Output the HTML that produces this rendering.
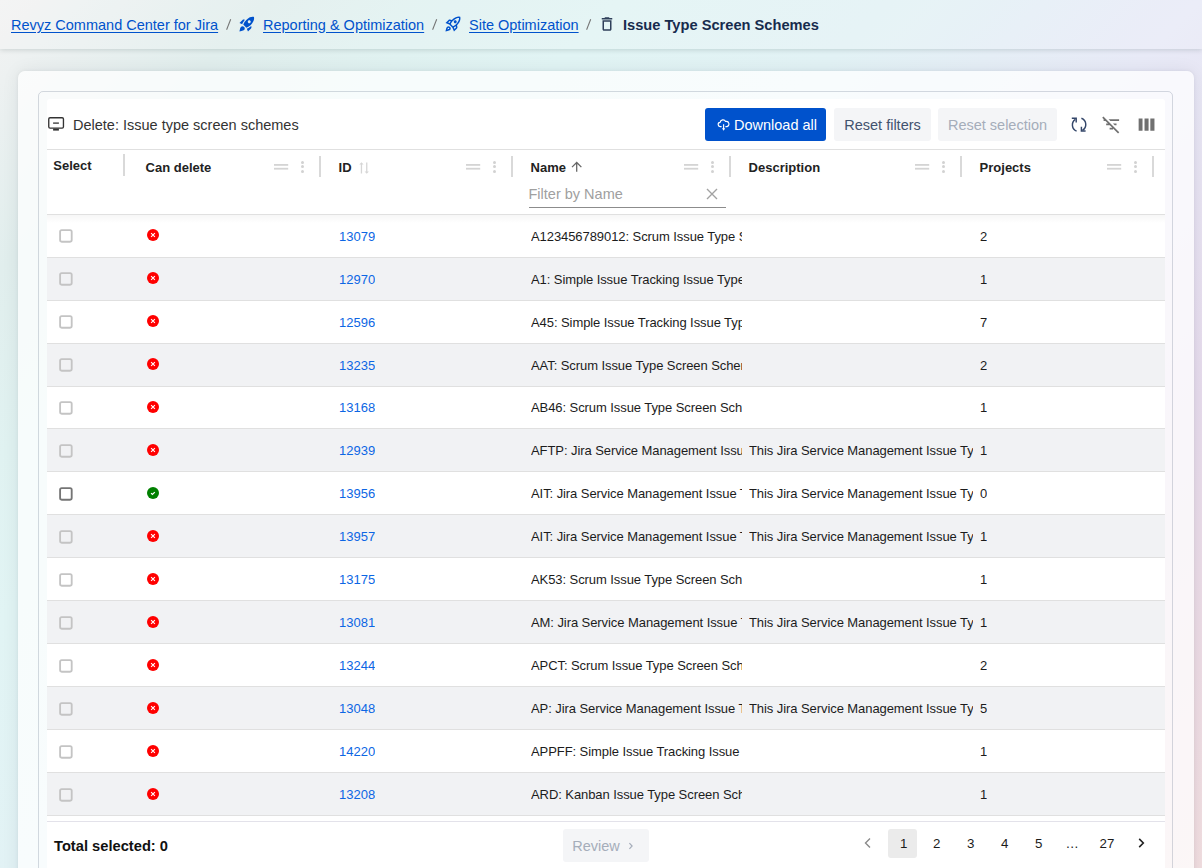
<!DOCTYPE html><html><head><meta charset="utf-8"><style>*{margin:0;padding:0;box-sizing:border-box}
html,body{width:1202px;height:868px;overflow:hidden;font-family:"Liberation Sans",sans-serif;position:relative}
.abs{position:absolute;line-height:0}
.bg{position:absolute;left:0;top:0;width:1202px;height:868px;background:linear-gradient(135deg,#f3f3f3 0%,#eaf0f0 6%,#e1eeed 13%,#e0f2f1 22%,#e1f4f4 30%,#e2f2f5 43%,#e8eaf7 58%,#e6dbec 77%,#ecdbe4 90%,#f1dee0 100%)}
.hdr{position:absolute;left:0;top:0;width:1202px;height:49px;background:rgba(255,255,255,0.14);box-shadow:0 1px 5px rgba(0,40,40,0.16)}
.bc{position:absolute;top:17.5px;font-size:14.5px;line-height:14.5px;color:#0052cc;text-decoration:underline;text-underline-offset:2px;white-space:nowrap}
.sl{position:absolute;top:17.5px;font-size:14.5px;line-height:14.5px;color:#6b6e76}
.bi{position:absolute;line-height:0}
.cur{position:absolute;top:17.9px;font-size:14.65px;line-height:14.65px;color:#172b4d;font-weight:bold;white-space:nowrap}
.outer{position:absolute;left:18px;top:71px;width:1176px;height:900px;border-radius:7px;background:rgba(255,255,255,0.74);box-shadow:0 0 4px rgba(0,30,40,0.06),0 0 18px rgba(0,30,40,0.07)}
.inner{position:absolute;left:38px;top:91px;width:1135px;height:900px;border-radius:5px;border:1px solid rgba(9,30,66,0.16)}
.paper{position:absolute;left:47px;top:99px;width:1118px;height:900px;border-radius:3px;background:#fff}
.ttl{position:absolute;top:117.5px;font-size:14.5px;line-height:14.5px;color:#333;white-space:nowrap}
.btn{position:absolute;top:108px;height:33px;border-radius:3px;display:flex;align-items:center;justify-content:center;font-size:14.5px;white-space:nowrap}
.btn svg{margin-right:5px}
.pri{background:#0052cc;color:#fff}
.sec{background:#f4f5f7;color:#42526e}
.dis{background:#f4f5f7;color:#a5adba}
.thead{position:absolute;left:47px;top:149px;width:1118px;height:66px;border-top:1px solid #e0e0e0;border-bottom:1px solid #e0e0e0;background:#fff}
.hl{position:absolute;top:160.6px;font-size:13px;line-height:13px;font-weight:bold;color:#222;white-space:nowrap}
.dh{position:absolute;top:163.9px;width:14.2px;height:5.6px;border-top:1.8px solid #d6d6d6;border-bottom:1.8px solid #d6d6d6}
.kb{position:absolute;top:160.5px;width:3px;height:12px}
.kb i{position:absolute;left:0;width:3px;height:3px;border-radius:50%;background:#d2d2d2}
.kb i:nth-child(1){top:0}.kb i:nth-child(2){top:4.85px}.kb i:nth-child(3){top:9.7px}
.sep{position:absolute;top:156px;width:2px;height:21px;background:#d9d9d9}
.filt{position:absolute;left:528.5px;top:187px;font-size:14.5px;line-height:14.5px;color:#a0a0a0;white-space:nowrap}
.fx{position:absolute;left:705.5px;top:187.6px;line-height:0}
.fline{position:absolute;left:529px;top:207px;width:197px;height:1px;background:#8c8c8c}
.row{position:absolute;left:47px;width:1118px;height:43px;border-bottom:1px solid #e0e0e0;background:#fff}
.row.odd{background:#f1f2f4}
.cb{position:absolute;left:59.2px;width:13.5px;height:13.5px;border:1.8px solid #c6c6c6;border-radius:2px}
.cb.dark{border-color:#757575}
.cid,.cname,.cdesc,.cproj{position:absolute;font-size:13px;line-height:17px;white-space:nowrap;overflow:hidden}
.cid{left:339px;color:#0c66e4}
.cname{left:531px;width:211px;color:#1c1c1c;letter-spacing:-0.075px}
.cdesc{left:749px;width:223.5px;color:#1c1c1c;letter-spacing:-0.075px}
.cproj{left:980px;color:#1c1c1c}
.fbor{position:absolute;left:47px;top:821px;width:1118px;height:1px;background:#e3e2ea}
.tot{position:absolute;left:54px;top:839px;font-size:14.7px;line-height:14.7px;font-weight:bold;color:#111;white-space:nowrap}
.pg-prev{position:absolute;left:862.5px;top:837px;line-height:0}
.pg-next{position:absolute;left:1135.5px;top:837px;line-height:0}
.pgsel{position:absolute;left:888px;top:829px;width:28.5px;height:29px;border-radius:3px;background:#ebebeb}
.pgn{position:absolute;top:837.2px;font-size:13.3px;line-height:13.3px;color:#1c1c1c}

.tshadow{position:absolute;left:47px;top:215px;width:1118px;height:8px;background:linear-gradient(rgba(0,0,0,0.035),rgba(0,0,0,0));z-index:5}
.btxt{position:absolute;top:117.5px;font-size:14.5px;line-height:14.5px;white-space:nowrap}
</style></head><body>
<div class="bg"></div>
<div class="hdr">
<a class="bc" style="left:11px">Revyz Command Center for Jira</a>
<div class="abs" style="left:225px;top:18px"><svg width="8" height="14" viewBox="0 0 8 14"><path d="M1.6 11.7L5.7 1.2" stroke="#737373" stroke-width="1.05"/></svg></div>
<span class="bi" style="left:238px;top:15px"><svg width="18" height="18" viewBox="0 0 24 24"><path fill="#0052cc" d="M9.19 6.35c-2.04 2.29-3.44 5.58-3.57 5.89L2 10.69l4.05-4.05c.47-.47 1.15-.68 1.81-.55zM11.17 17s3.74-1.55 5.89-3.7c5.4-5.4 4.5-9.62 4.21-10.57-.95-.3-5.17-1.19-10.57 4.21C8.55 9.09 7 12.83 7 12.83zm6.48-2.19c-2.29 2.04-5.58 3.44-5.890 3.57L13.31 22l4.05-4.05c.47-.47.68-1.15.55-1.81zM9 18c0 .83-.34 1.58-.88 2.12C6.94 21.3 2 22 2 22s.7-4.94 1.88-6.12C4.420 15.34 5.17 15 6 15c1.66 0 3 1.34 3 3m4-9c0-1.1.9-2 2-2s2 .9 2 2-.9 2-2 2-2-.9-2-2"/></svg></span>
<a class="bc" style="left:263px">Reporting &amp; Optimization</a>
<div class="abs" style="left:431px;top:18px"><svg width="8" height="14" viewBox="0 0 8 14"><path d="M1.6 11.7L5.7 1.2" stroke="#737373" stroke-width="1.05"/></svg></div>
<span class="bi" style="left:444.3px;top:14.8px"><svg width="18" height="18" viewBox="0 0 24 24"><path fill="#0052cc" d="M6 15c-.83 0-1.58.34-2.12.88C2.7 17.06 2 22 2 22s4.94-.7 6.12-1.88c.54-.54.88-1.29.88-2.12 0-1.66-1.34-3-3-3m.71 3.71c-.28.28-2.170.76-2.17.76s.47-1.88.76-2.17c.17-.19.42-.3.7-.3.55 0 1 .45 1 1 0 .28-.11.53-.29.71m10.71-5.06c6.36-6.36 4.24-11.31 4.24-11.31S16.71.22 10.35 6.58l-2.49-.5c-.65-.13-1.33.08-1.81.55L2 10.69l5 2.14L11.17 17l2.14 5 4.05-4.05c.47-.47.68-1.15.55-1.81zM7.41 10.83l-1.91-.82 1.97-1.97 1.44.29c-.57.83-1.08 1.7-1.5 2.5m6.58 7.67-.82-1.91c.8-.42 1.67-.93 2.49-1.5l.29 1.44zM16 12.24c-1.32 1.32-3.38 2.4-4.04 2.73l-2.93-2.93c.32-.65 1.4-2.71 2.73-4.04 4.68-4.68 8.230-3.99 8.23-3.99s.69 3.55-3.99 8.23M15 11c1.1 0 2-.9 2-2s-.9-2-2-2-2 .9-2 2 .9 2 2 2"/></svg></span>
<a class="bc" style="left:469px">Site Optimization</a>
<div class="abs" style="left:585px;top:18px"><svg width="8" height="14" viewBox="0 0 8 14"><path d="M1.6 11.7L5.7 1.2" stroke="#737373" stroke-width="1.05"/></svg></div>
<span class="bi" style="left:598px;top:14.75px"><svg width="18" height="18" viewBox="0 0 24 24"><path fill="#2f3f5a" d="M6 19c0 1.1.9 2 2 2h8c1.1 0 2-.9 2-2V7H6zM8 9h8v10H8zm7.5-5-1-1h-5l-1 1H5v2h14V4z"/></svg></span>
<span class="cur" style="left:623px">Issue Type Screen Schemes</span>
</div>
<div class="outer"></div><div class="inner"></div><div class="paper"></div>
<div class="abs" style="left:47px;top:116px"><svg width="20" height="16" viewBox="0 0 20 16"><rect x="1.75" y="1.75" width="14.7" height="10.3" rx="1.3" fill="none" stroke="#333" stroke-width="1.35"/><path d="M6.1 7.1h5.8" stroke="#333" stroke-width="1.3"/><path d="M6.1 12.6h5.8v2H6.1z" fill="#333"/></svg></div>
<div class="ttl" style="left:73px">Delete: Issue type screen schemes</div>
<div class="btn pri" style="left:705px;width:121px"></div>
<div class="abs" style="left:716.6px;top:118px"><svg width="14" height="15" viewBox="0 0 14 15"><path d="M4.6 8.6H3.4A2.1 2.1 0 0 1 3.1 4.4 2.9 2.9 0 0 1 8.6 3.5 2.3 2.3 0 0 1 10 8.6H8.4" fill="none" stroke="#fff" stroke-width="1.15" stroke-linejoin="round"/><path d="M6.6 6.2v5.4" stroke="#fff" stroke-width="1.15"/><path d="M5 10.3L6.6 12.7 8.2 10.3z" fill="#fff"/></svg></div>
<div class="btxt" style="left:734px;color:#fff">Download all</div>
<div class="btn sec" style="left:834px;width:97px"><span>Reset filters</span></div>
<div class="btn dis" style="left:938px;width:119px"><span>Reset selection</span></div>
<div class="abs" style="left:1066px;top:112px"><svg width="26" height="26" viewBox="0 0 26 26"><g fill="none" stroke="#34476a" stroke-width="1.45"><path d="M10.6 19.2A6.7 6.7 0 0 1 9.4 7.4"/><path d="M5.8 6.2H10.2V10.4"/><path d="M15.4 6.3A6.7 6.7 0 0 1 16.4 18.4"/><path d="M19.6 18.9H15.4V14.7"/></g></svg></div>
<div class="abs" style="left:1100.5px;top:114.1px"><svg width="20.7" height="20.7" viewBox="0 0 24 24"><path fill="#707070" d="M10.83 8H21V6H8.83l2 2zm5 5H18v-2h-4.17l2 2zM14 16.83V18h-4v-2h3.17l-3-3H6v-2h2.17l-3-3H3V6h.17L1.39 4.22 2.8 2.81l18.38 18.38-1.41 1.41L14 16.83z"/></svg></div>
<div class="abs" style="left:1136.3px;top:114px"><svg width="21.1" height="21.1" viewBox="0 0 24 24"><path fill="#707070" d="M3 5h4.4v14H3zM9.7 5h4.6v14H9.7zM16.3 5H21v14h-4.7z"/></svg></div>
<div class="thead"></div><div class="tshadow"></div>
<div class="hl" style="left:53.3px;top:159px">Select</div><div class="sep" style="left:123px;top:154px;height:22px"></div>
<div class="hl" style="left:145.6px">Can delete</div><div class="abs" style="left:273.8px;top:163.9px"><svg width="15" height="6" viewBox="0 0 15 6"><rect x="0" y="0" width="14.2" height="1.8" fill="#d4d4d4"/><rect x="0" y="3.8" width="14.2" height="1.8" fill="#d4d4d4"/></svg></div><div class="kb" style="left:301.2px"><i></i><i></i><i></i></div><div class="sep" style="left:319px"></div>
<div class="hl" style="left:338.6px">ID</div><div class="abs" style="left:355px;top:160.5px"><svg width="14" height="14" viewBox="0 0 14 14"><g fill="#d6d6d6"><path d="M5.8 2.6h1.3v9.9H5.8z"/><path d="M4.3 3.6L6.45 1.3 8.6 3.6z"/><path d="M11.1 1.5h1.3v9.9h-1.3z"/><path d="M9.6 10.4L11.75 12.7 13.9 10.4z"/></g></svg></div><div class="abs" style="left:465.8px;top:163.9px"><svg width="15" height="6" viewBox="0 0 15 6"><rect x="0" y="0" width="14.2" height="1.8" fill="#d4d4d4"/><rect x="0" y="3.8" width="14.2" height="1.8" fill="#d4d4d4"/></svg></div><div class="kb" style="left:493.2px"><i></i><i></i><i></i></div><div class="sep" style="left:511px"></div>
<div class="hl" style="left:530.6px">Name</div><div class="abs" style="left:569px;top:159px"><svg width="15.4" height="15.4" viewBox="0 0 24 24"><path fill="#666" d="M4 12l1.41 1.41L11 7.83V20h2V7.83l5.58 5.59L20 12l-8-8-8 8z"/></svg></div><div class="abs" style="left:683.8px;top:163.9px"><svg width="15" height="6" viewBox="0 0 15 6"><rect x="0" y="0" width="14.2" height="1.8" fill="#d4d4d4"/><rect x="0" y="3.8" width="14.2" height="1.8" fill="#d4d4d4"/></svg></div><div class="kb" style="left:711.2px"><i></i><i></i><i></i></div><div class="sep" style="left:729px"></div>
<div class="hl" style="left:748.6px">Description</div><div class="abs" style="left:914.8px;top:163.9px"><svg width="15" height="6" viewBox="0 0 15 6"><rect x="0" y="0" width="14.2" height="1.8" fill="#d4d4d4"/><rect x="0" y="3.8" width="14.2" height="1.8" fill="#d4d4d4"/></svg></div><div class="kb" style="left:942.2px"><i></i><i></i><i></i></div><div class="sep" style="left:960px"></div>
<div class="hl" style="left:979.6px">Projects</div><div class="abs" style="left:1106.8px;top:163.9px"><svg width="15" height="6" viewBox="0 0 15 6"><rect x="0" y="0" width="14.2" height="1.8" fill="#d4d4d4"/><rect x="0" y="3.8" width="14.2" height="1.8" fill="#d4d4d4"/></svg></div><div class="kb" style="left:1134.2px"><i></i><i></i><i></i></div><div class="sep" style="left:1152px"></div>
<div class="filt">Filter by Name</div><div class="fx"><svg width="12" height="12" viewBox="0 0 12 12"><path d="M1 1l10 10M11 1L1 11" stroke="#a2a2a2" stroke-width="1.35"/></svg></div><div class="fline"></div>
<div class="row" style="top:215px;height:43px"></div>
<div class="abs" style="left:59px;top:229px"><svg width="14" height="14" viewBox="0 0 14 14"><rect x="1.1" y="1.1" width="11.6" height="11.6" rx="1.6" fill="none" stroke="#c4c4c4" stroke-width="1.85"/></svg></div>
<div class="abs" style="left:147.1px;top:229.00px"><svg width="12" height="12" viewBox="0 0 12 12"><circle cx="6" cy="6" r="6" fill="#ff0000"/><path d="M4.1 4.1l3.8 3.8M7.9 4.1l-3.8 3.8" fill="none" stroke="#fff" stroke-width="1.1"/></svg></div>
<div class="cid" style="top:228.00px">13079</div>
<div class="cname" style="top:228.00px">A123456789012: Scrum Issue Type Screen Scheme</div>
<div class="cproj" style="top:228.00px">2</div>
<div class="row odd" style="top:258px;height:43px"></div>
<div class="abs" style="left:59px;top:272px"><svg width="14" height="14" viewBox="0 0 14 14"><rect x="1.1" y="1.1" width="11.6" height="11.6" rx="1.6" fill="none" stroke="#c4c4c4" stroke-width="1.85"/></svg></div>
<div class="abs" style="left:147.1px;top:272.00px"><svg width="12" height="12" viewBox="0 0 12 12"><circle cx="6" cy="6" r="6" fill="#ff0000"/><path d="M4.1 4.1l3.8 3.8M7.9 4.1l-3.8 3.8" fill="none" stroke="#fff" stroke-width="1.1"/></svg></div>
<div class="cid" style="top:271.00px">12970</div>
<div class="cname" style="top:271.00px">A1: Simple Issue Tracking Issue Type Screen Scheme</div>
<div class="cproj" style="top:271.00px">1</div>
<div class="row" style="top:301px;height:43px"></div>
<div class="abs" style="left:59px;top:315px"><svg width="14" height="14" viewBox="0 0 14 14"><rect x="1.1" y="1.1" width="11.6" height="11.6" rx="1.6" fill="none" stroke="#c4c4c4" stroke-width="1.85"/></svg></div>
<div class="abs" style="left:147.1px;top:315.00px"><svg width="12" height="12" viewBox="0 0 12 12"><circle cx="6" cy="6" r="6" fill="#ff0000"/><path d="M4.1 4.1l3.8 3.8M7.9 4.1l-3.8 3.8" fill="none" stroke="#fff" stroke-width="1.1"/></svg></div>
<div class="cid" style="top:314.00px">12596</div>
<div class="cname" style="top:314.00px">A45: Simple Issue Tracking Issue Type Screen Scheme</div>
<div class="cproj" style="top:314.00px">7</div>
<div class="row odd" style="top:344px;height:43px"></div>
<div class="abs" style="left:59px;top:358px"><svg width="14" height="14" viewBox="0 0 14 14"><rect x="1.1" y="1.1" width="11.6" height="11.6" rx="1.6" fill="none" stroke="#c4c4c4" stroke-width="1.85"/></svg></div>
<div class="abs" style="left:147.1px;top:358.00px"><svg width="12" height="12" viewBox="0 0 12 12"><circle cx="6" cy="6" r="6" fill="#ff0000"/><path d="M4.1 4.1l3.8 3.8M7.9 4.1l-3.8 3.8" fill="none" stroke="#fff" stroke-width="1.1"/></svg></div>
<div class="cid" style="top:357.00px">13235</div>
<div class="cname" style="top:357.00px">AAT: Scrum Issue Type Screen Scheme</div>
<div class="cproj" style="top:357.00px">2</div>
<div class="row" style="top:387px;height:42px"></div>
<div class="abs" style="left:59px;top:401px"><svg width="14" height="14" viewBox="0 0 14 14"><rect x="1.1" y="1.1" width="11.6" height="11.6" rx="1.6" fill="none" stroke="#c4c4c4" stroke-width="1.85"/></svg></div>
<div class="abs" style="left:147.1px;top:401.00px"><svg width="12" height="12" viewBox="0 0 12 12"><circle cx="6" cy="6" r="6" fill="#ff0000"/><path d="M4.1 4.1l3.8 3.8M7.9 4.1l-3.8 3.8" fill="none" stroke="#fff" stroke-width="1.1"/></svg></div>
<div class="cid" style="top:399.00px">13168</div>
<div class="cname" style="top:399.00px">AB46: Scrum Issue Type Screen Scheme</div>
<div class="cproj" style="top:399.00px">1</div>
<div class="row odd" style="top:429px;height:43px"></div>
<div class="abs" style="left:59px;top:444px"><svg width="14" height="14" viewBox="0 0 14 14"><rect x="1.1" y="1.1" width="11.6" height="11.6" rx="1.6" fill="none" stroke="#c4c4c4" stroke-width="1.85"/></svg></div>
<div class="abs" style="left:147.1px;top:444.00px"><svg width="12" height="12" viewBox="0 0 12 12"><circle cx="6" cy="6" r="6" fill="#ff0000"/><path d="M4.1 4.1l3.8 3.8M7.9 4.1l-3.8 3.8" fill="none" stroke="#fff" stroke-width="1.1"/></svg></div>
<div class="cid" style="top:442.00px">12939</div>
<div class="cname" style="top:442.00px">AFTP: Jira Service Management Issue Type Screen Scheme</div>
<div class="cdesc" style="top:442.00px">This Jira Service Management Issue Type Screen Scheme was generated for Project AFTP</div>
<div class="cproj" style="top:442.00px">1</div>
<div class="row" style="top:472px;height:43px"></div>
<div class="abs" style="left:59px;top:487px"><svg width="14" height="14" viewBox="0 0 14 14"><rect x="1.1" y="1.1" width="11.6" height="11.6" rx="1.6" fill="none" stroke="#757575" stroke-width="1.85"/></svg></div>
<div class="abs" style="left:147.1px;top:487.00px"><svg width="12" height="12" viewBox="0 0 12 12"><circle cx="6" cy="6" r="6" fill="#008000"/><path d="M4.1 6.1l1.3 1.3 2.4-2.3" fill="none" stroke="#fff" stroke-width="1.25"/></svg></div>
<div class="cid" style="top:485.00px">13956</div>
<div class="cname" style="top:485.00px">AIT: Jira Service Management Issue Type Screen Scheme</div>
<div class="cdesc" style="top:485.00px">This Jira Service Management Issue Type Screen Scheme was generated for Project AIT</div>
<div class="cproj" style="top:485.00px">0</div>
<div class="row odd" style="top:515px;height:43px"></div>
<div class="abs" style="left:59px;top:530px"><svg width="14" height="14" viewBox="0 0 14 14"><rect x="1.1" y="1.1" width="11.6" height="11.6" rx="1.6" fill="none" stroke="#c4c4c4" stroke-width="1.85"/></svg></div>
<div class="abs" style="left:147.1px;top:530.00px"><svg width="12" height="12" viewBox="0 0 12 12"><circle cx="6" cy="6" r="6" fill="#ff0000"/><path d="M4.1 4.1l3.8 3.8M7.9 4.1l-3.8 3.8" fill="none" stroke="#fff" stroke-width="1.1"/></svg></div>
<div class="cid" style="top:528.00px">13957</div>
<div class="cname" style="top:528.00px">AIT: Jira Service Management Issue Type Screen Scheme</div>
<div class="cdesc" style="top:528.00px">This Jira Service Management Issue Type Screen Scheme was generated for Project AIT</div>
<div class="cproj" style="top:528.00px">1</div>
<div class="row" style="top:558px;height:43px"></div>
<div class="abs" style="left:59px;top:573px"><svg width="14" height="14" viewBox="0 0 14 14"><rect x="1.1" y="1.1" width="11.6" height="11.6" rx="1.6" fill="none" stroke="#c4c4c4" stroke-width="1.85"/></svg></div>
<div class="abs" style="left:147.1px;top:573.00px"><svg width="12" height="12" viewBox="0 0 12 12"><circle cx="6" cy="6" r="6" fill="#ff0000"/><path d="M4.1 4.1l3.8 3.8M7.9 4.1l-3.8 3.8" fill="none" stroke="#fff" stroke-width="1.1"/></svg></div>
<div class="cid" style="top:571.00px">13175</div>
<div class="cname" style="top:571.00px">AK53: Scrum Issue Type Screen Scheme</div>
<div class="cproj" style="top:571.00px">1</div>
<div class="row odd" style="top:601px;height:43px"></div>
<div class="abs" style="left:59px;top:616px"><svg width="14" height="14" viewBox="0 0 14 14"><rect x="1.1" y="1.1" width="11.6" height="11.6" rx="1.6" fill="none" stroke="#c4c4c4" stroke-width="1.85"/></svg></div>
<div class="abs" style="left:147.1px;top:616.00px"><svg width="12" height="12" viewBox="0 0 12 12"><circle cx="6" cy="6" r="6" fill="#ff0000"/><path d="M4.1 4.1l3.8 3.8M7.9 4.1l-3.8 3.8" fill="none" stroke="#fff" stroke-width="1.1"/></svg></div>
<div class="cid" style="top:614.00px">13081</div>
<div class="cname" style="top:614.00px">AM: Jira Service Management Issue Type Screen Scheme</div>
<div class="cdesc" style="top:614.00px">This Jira Service Management Issue Type Screen Scheme was generated for Project AM</div>
<div class="cproj" style="top:614.00px">1</div>
<div class="row" style="top:644px;height:43px"></div>
<div class="abs" style="left:59px;top:659px"><svg width="14" height="14" viewBox="0 0 14 14"><rect x="1.1" y="1.1" width="11.6" height="11.6" rx="1.6" fill="none" stroke="#c4c4c4" stroke-width="1.85"/></svg></div>
<div class="abs" style="left:147.1px;top:659.00px"><svg width="12" height="12" viewBox="0 0 12 12"><circle cx="6" cy="6" r="6" fill="#ff0000"/><path d="M4.1 4.1l3.8 3.8M7.9 4.1l-3.8 3.8" fill="none" stroke="#fff" stroke-width="1.1"/></svg></div>
<div class="cid" style="top:657.00px">13244</div>
<div class="cname" style="top:657.00px">APCT: Scrum Issue Type Screen Scheme</div>
<div class="cproj" style="top:657.00px">2</div>
<div class="row odd" style="top:687px;height:43px"></div>
<div class="abs" style="left:59px;top:702px"><svg width="14" height="14" viewBox="0 0 14 14"><rect x="1.1" y="1.1" width="11.6" height="11.6" rx="1.6" fill="none" stroke="#c4c4c4" stroke-width="1.85"/></svg></div>
<div class="abs" style="left:147.1px;top:702.00px"><svg width="12" height="12" viewBox="0 0 12 12"><circle cx="6" cy="6" r="6" fill="#ff0000"/><path d="M4.1 4.1l3.8 3.8M7.9 4.1l-3.8 3.8" fill="none" stroke="#fff" stroke-width="1.1"/></svg></div>
<div class="cid" style="top:700.00px">13048</div>
<div class="cname" style="top:700.00px">AP: Jira Service Management Issue Type Screen Scheme</div>
<div class="cdesc" style="top:700.00px">This Jira Service Management Issue Type Screen Scheme was generated for Project AP</div>
<div class="cproj" style="top:700.00px">5</div>
<div class="row" style="top:730px;height:43px"></div>
<div class="abs" style="left:59px;top:745px"><svg width="14" height="14" viewBox="0 0 14 14"><rect x="1.1" y="1.1" width="11.6" height="11.6" rx="1.6" fill="none" stroke="#c4c4c4" stroke-width="1.85"/></svg></div>
<div class="abs" style="left:147.1px;top:745.00px"><svg width="12" height="12" viewBox="0 0 12 12"><circle cx="6" cy="6" r="6" fill="#ff0000"/><path d="M4.1 4.1l3.8 3.8M7.9 4.1l-3.8 3.8" fill="none" stroke="#fff" stroke-width="1.1"/></svg></div>
<div class="cid" style="top:743.00px">14220</div>
<div class="cname" style="top:743.00px">APPFF: Simple Issue Tracking Issue Type Screen Scheme</div>
<div class="cproj" style="top:743.00px">1</div>
<div class="row odd" style="top:773px;height:43px"></div>
<div class="abs" style="left:59px;top:788px"><svg width="14" height="14" viewBox="0 0 14 14"><rect x="1.1" y="1.1" width="11.6" height="11.6" rx="1.6" fill="none" stroke="#c4c4c4" stroke-width="1.85"/></svg></div>
<div class="abs" style="left:147.1px;top:788.00px"><svg width="12" height="12" viewBox="0 0 12 12"><circle cx="6" cy="6" r="6" fill="#ff0000"/><path d="M4.1 4.1l3.8 3.8M7.9 4.1l-3.8 3.8" fill="none" stroke="#fff" stroke-width="1.1"/></svg></div>
<div class="cid" style="top:786.00px">13208</div>
<div class="cname" style="top:786.00px">ARD: Kanban Issue Type Screen Scheme</div>
<div class="cproj" style="top:786.00px">1</div>
<div class="fbor"></div>
<div class="tot">Total selected: 0</div>
<div class="btn dis" style="left:563px;top:829px;width:86px"><span>Review</span><svg width="8" height="10" viewBox="0 0 8 10" style="margin-left:7px"><path d="M2.4 2.2L5.1 5 2.4 7.8" fill="none" stroke="#a5adba" stroke-width="1.2"/></svg></div>
<div class="pg-prev"><svg width="10" height="12" viewBox="0 0 10 12"><path d="M7 1.5L2.5 6 7 10.5" fill="none" stroke="#8a8a8a" stroke-width="1.4"/></svg></div>
<div class="pgsel"></div>
<div class="pgn" style="left:900px">1</div>
<div class="pgn" style="left:933px">2</div>
<div class="pgn" style="left:967px">3</div>
<div class="pgn" style="left:1001px">4</div>
<div class="pgn" style="left:1035px">5</div>
<div class="pgn" style="left:1065.5px">…</div>
<div class="pgn" style="left:1099.5px">27</div>
<div class="pg-next"><svg width="10" height="12" viewBox="0 0 10 12"><path d="M3.2 1.9L7.3 6 3.2 10.1" fill="none" stroke="#222" stroke-width="1.6"/></svg></div>
</body></html>
